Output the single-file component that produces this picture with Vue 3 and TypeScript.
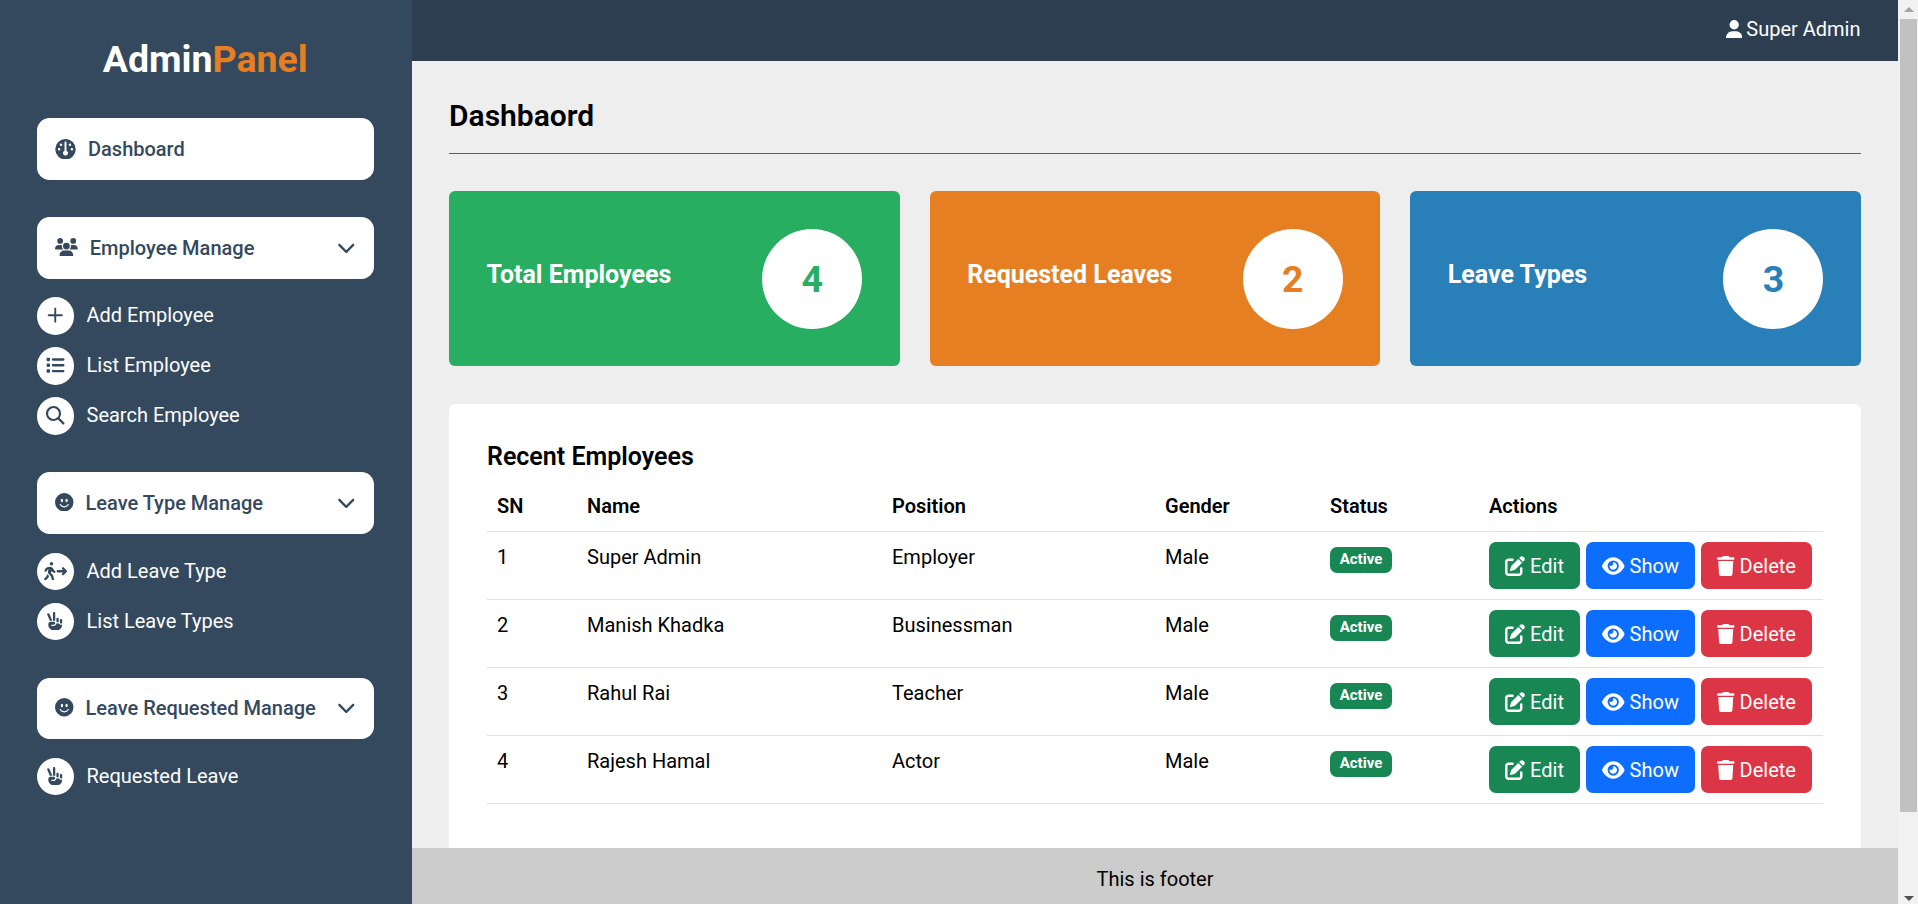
<script setup lang="ts">
interface Icon {
  box: string
  path: string
}
interface MenuItem {
  label: string
  icon: string
}
interface MenuGroup {
  label: string
  icon: string
  size: string
  items: MenuItem[]
}
interface Employee {
  name: string
  position: string
  gender: string
}

const icons: Record<string, Icon> = {
  gauge: {
    box: '0 0 512 512',
    path: 'M0 256a256 256 0 1 1 512 0A256 256 0 1 1 0 256zm320 96c0-26.9-16.5-49.9-40-59.3V88c0-13.3-10.7-24-24-24s-24 10.7-24 24V292.7c-23.5 9.5-40 32.5-40 59.3c0 35.3 28.7 64 64 64s64-28.7 64-64zM144 176a32 32 0 1 0 0-64 32 32 0 1 0 0 64zm-16 80a32 32 0 1 0 -64 0 32 32 0 1 0 64 0zm288 32a32 32 0 1 0 0-64 32 32 0 1 0 0 64zM400 144a32 32 0 1 0 -64 0 32 32 0 1 0 64 0z',
  },
  users: {
    box: '0 0 640 512',
    path: 'M144 0a80 80 0 1 1 0 160A80 80 0 1 1 144 0zM512 0a80 80 0 1 1 0 160A80 80 0 1 1 512 0zM0 298.7C0 239.8 47.8 192 106.7 192h42.7c15.9 0 31 3.5 44.6 9.7c-1.3 7.2-1.9 14.7-1.9 22.3c0 38.2 16.8 72.5 43.3 96c-.2 0-.4 0-.7 0H21.3C9.6 320 0 310.4 0 298.7zM405.3 320c-.2 0-.4 0-.7 0c26.6-23.5 43.3-57.8 43.3-96c0-7.6-.7-15-1.9-22.3c13.6-6.3 28.7-9.7 44.6-9.7h42.7C592.2 192 640 239.8 640 298.7c0 11.8-9.6 21.3-21.3 21.3H405.3zM224 224a96 96 0 1 1 192 0 96 96 0 1 1 -192 0zM128 485.3C128 411.7 187.7 352 261.3 352H378.7C452.3 352 512 411.7 512 485.3c0 14.7-11.9 26.7-26.7 26.7H154.7c-14.7 0-26.7-11.9-26.7-26.7z',
  },
  smile: {
    box: '0 0 16 16',
    path: 'M8 16A8 8 0 1 0 8 0a8 8 0 0 0 0 16zM7 6.5C7 7.328 6.552 8 6 8s-1-.672-1-1.5S5.448 5 6 5s1 .672 1 1.5zM4.285 9.567a.5.5 0 0 1 .683.183A3.498 3.498 0 0 0 8 11.5a3.498 3.498 0 0 0 3.032-1.75.5.5 0 1 1 .866.5A4.498 4.498 0 0 1 8 12.5a4.498 4.498 0 0 1-3.898-2.25.5.5 0 0 1 .183-.683zM10 8c-.552 0-1-.672-1-1.5S9.448 5 10 5s1 .672 1 1.5S10.552 8 10 8z',
  },
  chevron: {
    box: '0 0 512 512',
    path: 'M233.4 406.6c12.5 12.5 32.8 12.5 45.3 0l192-192c12.5-12.5 12.5-32.8 0-45.3s-32.8-12.5-45.3 0L256 338.7 86.6 169.4c-12.5-12.5-32.8-12.5-45.3 0s-12.5 32.8 0 45.3l192 192z',
  },
  plus: {
    box: '0 0 448 512',
    path: 'M250 74c0-14.4-11.6-26-26-26s-26 11.6-26 26V230H42c-14.4 0-26 11.6-26 26s11.6 26 26 26H198V438c0 14.4 11.6 26 26 26s26-11.6 26-26V282H406c14.4 0 26-11.6 26-26s-11.6-26-26-26H250V74z',
  },
  list: {
    box: '0 0 512 512',
    path: 'M40 48C26.7 48 16 58.7 16 72v48c0 13.3 10.7 24 24 24H88c13.3 0 24-10.7 24-24V72c0-13.3-10.7-24-24-24H40zM192 64c-17.7 0-32 14.3-32 32s14.3 32 32 32H480c17.7 0 32-14.3 32-32s-14.3-32-32-32H192zm0 160c-17.7 0-32 14.3-32 32s14.3 32 32 32H480c17.7 0 32-14.3 32-32s-14.3-32-32-32H192zm0 160c-17.7 0-32 14.3-32 32s14.3 32 32 32H480c17.7 0 32-14.3 32-32s-14.3-32-32-32H192zM16 232v48c0 13.3 10.7 24 24 24H88c13.3 0 24-10.7 24-24V232c0-13.3-10.7-24-24-24H40c-13.3 0-24 10.7-24 24zM40 368c-13.3 0-24 10.7-24 24v48c0 13.3 10.7 24 24 24H88c13.3 0 24-10.7 24-24V392c0-13.3-10.7-24-24-24H40z',
  },
  search: {
    box: '0 0 512 512',
    path: 'M416 208c0 45.9-14.9 88.3-40 122.7L502.6 457.4c12.5 12.5 12.5 32.8 0 45.3s-32.8 12.5-45.3 0L330.7 376c-34.4 25.2-76.8 40-122.7 40C93.1 416 0 322.9 0 208S93.1 0 208 0S416 93.1 416 208zM208 358a150 150 0 1 0 0-300 150 150 0 1 0 0 300z',
  },
  walk: {
    box: '0 0 640 512',
    path: 'M208 96c26.5 0 48-21.5 48-48S234.5 0 208 0s-48 21.5-48 48s21.5 48 48 48zM123.7 200.5c1-.4 1.9-.8 2.9-1.2l-16.9 63.5c-5.6 21.1-.1 43.6 14.7 59.7l70.7 77.1 22 88.1c4.3 17.1 21.7 27.6 38.8 23.3s27.6-21.7 23.3-38.8l-23-92.1c-1.9-7.8-5.8-14.9-11.2-20.8l-49.5-54 19.3-65.5 9.6 23c4.4 10.6 12.5 19.3 22.8 24.5l26.7 13.3c15.8 7.9 35 1.5 42.9-14.3s1.5-35-14.3-42.9L281 232.7l-15.3-36.8C248.5 154.8 208.3 128 163.7 128c-22.8 0-45.3 4.8-66.1 14l-8 3.5c-32.9 14.6-58.1 42.4-69.4 76.5l-2.6 7.8c-5.6 16.8 3.5 34.9 20.2 40.5s34.9-3.5 40.5-20.2l2.6-7.8c5.7-17.1 18.3-30.9 34.7-38.2l8-3.5zm-30 135.1L68.7 398 9.4 457.4c-12.5 12.5-12.5 32.8 0 45.3s32.8 12.5 45.3 0l62.3-62.3c4.6-4.6 8.2-10.1 10.6-16.1l14.5-36.2-40.7-44.4c-2.5-2.7-4.8-5.6-7-8.6zM550.6 153.4c-12.5-12.5-32.8-12.5-45.3 0s-12.5 32.8 0 45.3L530.7 224H384c-17.7 0-32 14.3-32 32s14.3 32 32 32H530.7l-25.4 25.4c-12.5 12.5-12.5 32.8 0 45.3s32.8 12.5 45.3 0l80-80c12.5-12.5 12.5-32.8 0-45.3l-80-80z',
  },
  peace: {
    box: '0 0 512 512',
    path: 'M224 0c17.7 0 32 14.3 32 32V240H192V32c0-17.7 14.3-32 32-32zm96 160c17.7 0 32 14.3 32 32v64c0 17.7-14.3 32-32 32s-32-14.3-32-32V192c0-17.7 14.3-32 32-32zm64 64c0-17.7 14.3-32 32-32s32 14.3 32 32v64c0 17.7-14.3 32-32 32s-32-14.3-32-32V224zM93.3 51.2L175.9 240H106.1L34.7 76.8C27.6 60.6 35 41.8 51.2 34.7s35.1 .3 42.1 16.5zm27 221.3l-.2-.5h69.9H216c22.1 0 40 17.9 40 40s-17.9 40-40 40H160c-8.8 0-16 7.2-16 16s7.2 16 16 16h56c39.8 0 72-32.2 72-72l0-.6c9.4 5.4 20.3 8.6 32 8.6c13.2 0 25.4-4 35.6-10.8c8.7 24.9 32.5 42.8 60.4 42.8c11.7 0 22.6-3.1 32-8.6V352c0 88.4-71.6 160-160 160H226.3c-42.4 0-83.1-16.9-113.1-46.9l-11.6-11.6C77.5 429.5 64 396.9 64 363V336c0-32.7 24.6-59.7 56.3-63.5z',
  },
  user: {
    box: '0 0 448 512',
    path: 'M224 256A128 128 0 1 0 224 0a128 128 0 1 0 0 256zm-45.7 48C79.8 304 0 383.8 0 482.3C0 498.7 13.3 512 29.7 512H418.3c16.4 0 29.7-13.3 29.7-29.7C448 383.8 368.2 304 269.7 304H178.3z',
  },
  edit: {
    box: '0 0 512 512',
    path: 'M471.6 21.7c-21.9-21.9-57.3-21.9-79.2 0L362.3 51.7l97.9 97.9 30.1-30.1c21.9-21.9 21.9-57.3 0-79.2L471.6 21.7zm-299.2 220c-6.1 6.1-10.8 13.6-13.5 21.9l-29.6 88.8c-2.9 8.6-.6 18.1 5.8 24.6s15.9 8.7 24.6 5.8l88.8-29.6c8.2-2.7 15.7-7.4 21.9-13.5L437.7 172.3 339.7 74.3 172.4 241.7zM96 64C43 64 0 107 0 160V416c0 53 43 96 96 96H352c53 0 96-43 96-96V320c0-17.7-14.3-32-32-32s-32 14.3-32 32v96c0 17.7-14.3 32-32 32H96c-17.7 0-32-14.3-32-32V160c0-17.7 14.3-32 32-32h96c17.7 0 32-14.3 32-32s-14.3-32-32-32H96z',
  },
  show: {
    box: '0 0 576 512',
    path: 'M288 32c-80.8 0-145.5 36.8-192.6 80.6C48.6 156 17.3 208 2.5 243.7c-3.3 7.9-3.3 16.7 0 24.6C17.3 304 48.6 356 95.4 399.4C142.5 443.2 207.2 480 288 480s145.5-36.8 192.6-80.6c46.8-43.5 78.1-95.4 93-131.1c3.3-7.9 3.3-16.7 0-24.6c-14.9-35.7-46.2-87.7-93-131.1C433.5 68.8 368.8 32 288 32zM144 256a144 144 0 1 1 288 0 144 144 0 1 1 -288 0zm144-64c0 35.3-28.7 64-64 64c-7.1 0-13.9-1.2-20.3-3.3c-5.5-1.8-11.9 1.6-11.7 7.4c.3 6.9 1.3 13.8 3.2 20.7c13.7 51.2 66.4 81.6 117.6 67.9s81.6-66.4 67.9-117.6c-11.1-41.5-47.8-69.4-88.6-71.1c-5.8-.2-9.2 6.1-7.4 11.7c2.1 6.4 3.3 13.2 3.3 20.3z',
  },
  trash: {
    box: '0 0 448 512',
    path: 'M135.2 17.7L128 32H32C14.3 32 0 46.3 0 64S14.3 96 32 96H416c17.7 0 32-14.3 32-32s-14.3-32-32-32H320l-7.2-14.3C307.4 6.8 296.3 0 284.2 0H163.8c-12.1 0-23.2 6.8-28.6 17.7zM416 128H32L53.2 467c1.6 25.3 22.6 45 47.9 45H346.9c25.3 0 46.3-19.7 47.9-45L416 128z',
  },
}

const groups: MenuGroup[] = [
  { label: 'Dashboard', icon: 'gauge', size: 'size-gauge', items: [] },
  {
    label: 'Employee Manage',
    icon: 'users',
    size: 'size-users',
    items: [
      { label: 'Add Employee', icon: 'plus' },
      { label: 'List Employee', icon: 'list' },
      { label: 'Search Employee', icon: 'search' },
    ],
  },
  {
    label: 'Leave Type Manage',
    icon: 'smile',
    size: 'size-smile',
    items: [
      { label: 'Add Leave Type', icon: 'walk' },
      { label: 'List Leave Types', icon: 'peace' },
    ],
  },
  {
    label: 'Leave Requested Manage',
    icon: 'smile',
    size: 'size-smile',
    items: [{ label: 'Requested Leave', icon: 'peace' }],
  },
]

const stats = [
  { label: 'Total Employees', value: 4, tone: 'green' },
  { label: 'Requested Leaves', value: 2, tone: 'orange' },
  { label: 'Leave Types', value: 3, tone: 'blue' },
]

const columns = ['SN', 'Name', 'Position', 'Gender', 'Status', 'Actions']

const employees: Employee[] = [
  { name: 'Super Admin', position: 'Employer', gender: 'Male' },
  { name: 'Manish Khadka', position: 'Businessman', gender: 'Male' },
  { name: 'Rahul Rai', position: 'Teacher', gender: 'Male' },
  { name: 'Rajesh Hamal', position: 'Actor', gender: 'Male' },
]

const actions = [
  { label: 'Edit', icon: 'edit' },
  { label: 'Show', icon: 'show' },
  { label: 'Delete', icon: 'trash' },
]
</script>

<template>
  <div class="page">
    <aside class="sidebar">
      <div class="logo">Admin<span>Panel</span></div>
      <nav>
        <section v-for="group in groups" :key="group.label" class="group">
          <a class="group-head">
            <svg :class="group.size" :viewBox="icons[group.icon].box"><path :d="icons[group.icon].path" /></svg>
            <span class="group-label">{{ group.label }}</span>
            <svg v-if="group.items.length" class="chevron" :viewBox="icons.chevron.box"><path :d="icons.chevron.path" /></svg>
          </a>
          <ul v-if="group.items.length" class="items">
            <li v-for="item in group.items" :key="item.label">
              <span class="disc">
                <svg :class="'glyph-' + item.icon" :viewBox="icons[item.icon].box"><path :d="icons[item.icon].path" /></svg>
              </span>
              <a>{{ item.label }}</a>
            </li>
          </ul>
        </section>
      </nav>
    </aside>

    <div class="body">
      <header class="topbar">
        <svg :viewBox="icons.user.box"><path :d="icons.user.path" /></svg>
        <span>Super Admin</span>
      </header>

      <main class="content">
        <h1>Dashbaord</h1>
        <div class="stats">
          <div v-for="stat in stats" :key="stat.label" class="stat" :class="stat.tone">
            <h2>{{ stat.label }}</h2>
            <div class="count">{{ stat.value }}</div>
          </div>
        </div>

        <section class="panel">
          <h3>Recent Employees</h3>
          <table>
            <thead>
              <tr>
                <th v-for="column in columns" :key="column" :class="'col-' + column.toLowerCase()">{{ column }}</th>
              </tr>
            </thead>
            <tbody>
              <tr v-for="(employee, index) in employees" :key="employee.name">
                <td>{{ index + 1 }}</td>
                <td>{{ employee.name }}</td>
                <td>{{ employee.position }}</td>
                <td>{{ employee.gender }}</td>
                <td><span class="badge">Active</span></td>
                <td>
                  <div class="actions">
                    <button v-for="action in actions" :key="action.label" type="button" :class="action.icon">
                      <svg :viewBox="icons[action.icon].box"><path :d="icons[action.icon].path" /></svg>
                      <span>{{ action.label }}</span>
                    </button>
                  </div>
                </td>
              </tr>
            </tbody>
          </table>
        </section>
      </main>

      <footer class="footer">This is footer</footer>
    </div>

    <div class="scrollbar">
      <span class="arrow up"></span>
      <span class="thumb"></span>
      <span class="arrow down"></span>
    </div>
  </div>
</template>

<style>
html,
body {
  margin: 0;
  overflow: hidden;
}
</style>

<style scoped>
* {
  box-sizing: border-box;
}
.page {
  display: flex;
  height: 904px;
  overflow: hidden;
  background: #eee;
  color: #000;
  font: 400 20px/30px Roboto, 'Liberation Sans', sans-serif;
}
svg {
  display: block;
  flex: none;
  fill: currentColor;
}
h1,
h2,
h3,
ul {
  margin: 0;
  padding: 0;
}

.sidebar {
  flex: none;
  width: 412px;
  padding: 31px 38px 0 37px;
  background: #34495e;
  color: #fff;
}
.logo {
  height: 56px;
  margin-bottom: 31px;
  padding-right: 0.5px;
  text-align: center;
  font-size: 37.5px;
  font-weight: 700;
  line-height: 56px;
}
.logo span {
  color: #e67e22;
}
.group {
  margin-bottom: 37.5px;
}
.group-head {
  display: flex;
  align-items: center;
  height: 61.5px;
  padding: 0 18.5px 0 18px;
  border-radius: 12.5px;
  background: #fff;
  color: #34495e;
  font-weight: 500;
}
.group-label {
  flex: 1;
  margin-left: 12px;
}
.size-gauge {
  width: 21px;
  height: 20.5px;
}
.size-users {
  width: 22.8px;
  height: 18.4px;
  margin-top: -2px;
}
.size-smile {
  width: 18.5px;
  height: 18.5px;
  margin-top: -2px;
}
.chevron {
  width: 18.5px;
  height: 18.5px;
  margin-top: -2px;
}
.items {
  display: flex;
  flex-direction: column;
  gap: 12.5px;
  margin-top: 18.75px;
  list-style: none;
}
.items li {
  display: flex;
  align-items: center;
  gap: 12.5px;
  height: 37.5px;
}
.items a {
  margin-top: -1.3px;
}
.disc {
  display: flex;
  align-items: center;
  justify-content: center;
  width: 37px;
  height: 37.5px;
  border-radius: 50%;
  background: #fff;
  color: #34495e;
}
.disc svg {
  width: 18.5px;
  height: 18.5px;
  margin-top: -1px;
}
.disc .glyph-walk {
  width: 23px;
}

.body {
  display: flex;
  flex: 1;
  flex-direction: column;
  min-width: 0;
}
.topbar {
  display: flex;
  flex: none;
  align-items: center;
  justify-content: flex-end;
  gap: 4px;
  height: 61px;
  padding: 0 37.5px 3px 0;
  background: #2c3e50;
  color: #fff;
}
.topbar svg {
  width: 16.4px;
  height: 18.75px;
}
.content {
  flex: 1;
  min-height: 0;
  overflow: hidden;
  padding: 30px 37px 0;
}
h1 {
  height: 63px;
  margin-bottom: 37px;
  border-bottom: 1px solid #5f5f5f;
  font-size: 30px;
  font-weight: 600;
  line-height: 49px;
}
.stats {
  display: grid;
  grid-template-columns: repeat(3, 1fr);
  gap: 30px;
}
.stat {
  display: flex;
  align-items: center;
  justify-content: space-between;
  height: 175px;
  padding: 0 37.5px;
  border-radius: 6px;
  color: #fff;
}
.green {
  background: #27ae60;
  --tone: #27ae60;
}
.orange {
  background: #e67e22;
  --tone: #e67e22;
}
.blue {
  background: #2980b9;
  --tone: #2980b9;
}
.stat h2 {
  padding-bottom: 7px;
  font-size: 25px;
  font-weight: 700;
}
.count {
  width: 100px;
  height: 100px;
  border-radius: 50%;
  background: #fff;
  color: var(--tone);
  text-align: center;
  font-size: 37.5px;
  font-weight: 700;
  line-height: 100px;
}
.panel {
  height: 500px;
  margin-top: 38px;
  padding: 37px 38px;
  border-radius: 6px;
  background: #fff;
}
h3 {
  height: 40px;
  font-size: 25px;
  font-weight: 600;
  line-height: 32px;
}
table {
  width: 100%;
  table-layout: fixed;
  border-collapse: separate;
  border-spacing: 0;
}
th,
td {
  padding: 10px;
  border-bottom: 1px solid #dee2e6;
  text-align: left;
  vertical-align: top;
}
th {
  font-weight: 600;
}
.col-sn {
  width: 90px;
}
.col-name {
  width: 305px;
}
.col-position {
  width: 273px;
}
.col-gender {
  width: 165px;
}
.col-status {
  width: 159px;
}
.badge {
  display: block;
  width: 62px;
  height: 26px;
  margin-top: 5px;
  border-radius: 7px;
  background: #198754;
  color: #fff;
  text-align: center;
  font-size: 15px;
  font-weight: 700;
  line-height: 24px;
}
.actions {
  display: flex;
  gap: 6px;
}
button {
  display: flex;
  align-items: center;
  justify-content: center;
  gap: 5px;
  height: 47px;
  padding: 0;
  border: 0;
  border-radius: 7px;
  color: #fff;
  font: inherit;
}
button svg {
  height: 20px;
}
button span {
  padding-top: 1px;
}
.edit {
  width: 91px;
  background: #198754;
}
.edit svg {
  width: 20px;
}
.show {
  width: 109px;
  background: #0d6efd;
}
.show svg {
  width: 22.5px;
}
.trash {
  width: 111px;
  background: #dc3545;
}
.trash svg {
  width: 17.5px;
}
.footer {
  flex: none;
  height: 56px;
  padding-top: 16px;
  background: #ccc;
  text-align: center;
}

.scrollbar {
  display: flex;
  flex: none;
  flex-direction: column;
  align-items: center;
  width: 20px;
  padding: 7px 1px 3px 2px;
  background: #f1f1f1;
}
.thumb {
  width: 17px;
  height: 793px;
  margin: 7px 0 auto;
  background: #c1c1c1;
}
.arrow {
  border: 5px solid transparent;
}
.up {
  border-top: 0;
  border-bottom-color: #a3a3a3;
}
.down {
  border-bottom: 0;
  border-top-color: #505050;
}
</style>
